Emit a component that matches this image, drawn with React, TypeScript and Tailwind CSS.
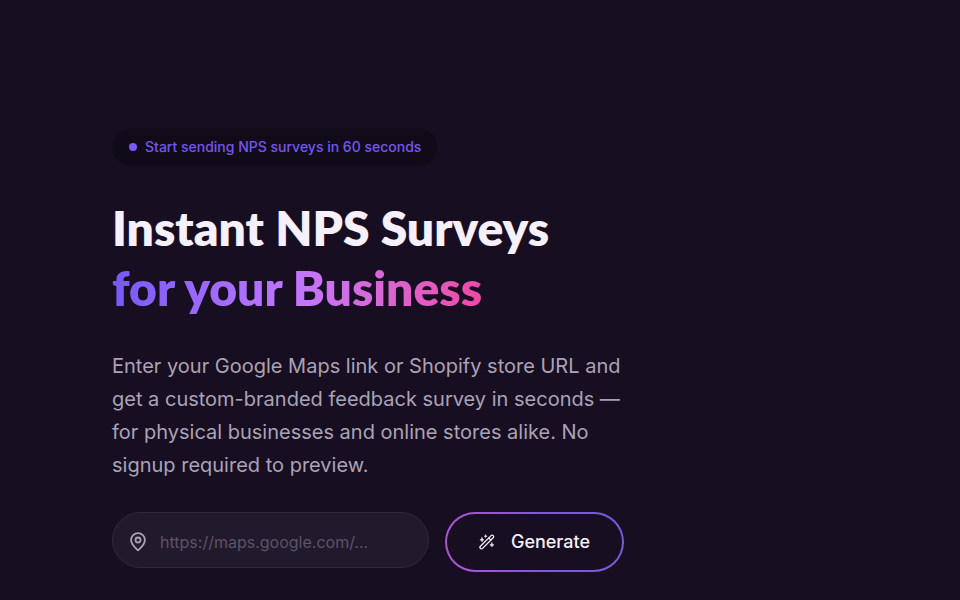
import { useState } from "react";

const MapPinIcon = () => (
    <svg className="size-5 shrink-0 text-[#aaa3b6]" viewBox="0 0 20 20" fill="none" stroke="currentColor" strokeWidth="1.8" strokeLinejoin="round" aria-hidden="true">
        <path d="M10 18.4 C7.4 15.8 3.1 12.6 3.1 8 C3.1 4.2 6.2 1.2 10 1.2 C13.8 1.2 16.9 4.2 16.9 8 C16.9 12.6 12.6 15.8 10 18.4 Z" />
        <circle cx="10" cy="8" r="2.5" />
    </svg>
);

const WandIcon = () => (
    <svg className="size-4 shrink-0" viewBox="0 0 16 16" fill="none" stroke="currentColor" strokeWidth="1.3" strokeLinecap="round" strokeLinejoin="round" aria-hidden="true">
        <path d="M1.4 12.2 L12.1 1.6 C12.7 1 13.6 1 14.2 1.6 C14.8 2.2 14.8 3.1 14.2 3.7 L3.6 14.4 C3 15 2 15 1.4 14.4 C.8 13.8 .8 12.8 1.4 12.2 Z" />
        <path d="M9.7 4 L11.8 6.1" />
        <path d="M3 3.6 L3.6 5.2 L5.1 5.8 L3.6 6.4 L3 7.9 L2.4 6.4 L.9 5.8 L2.4 5.2 Z M12.9 8.7 L13.5 10.3 L15 10.9 L13.5 11.5 L12.9 13 L12.3 11.5 L10.8 10.9 L12.3 10.3 Z" fill="currentColor" strokeWidth="0.5" />
        <path d="M6.6 .7 L7.1 1.7 L8.1 2.2 L7.1 2.7 L6.6 3.7 L6.1 2.7 L5.1 2.2 L6.1 1.7 Z" fill="currentColor" strokeWidth="0.4" />
    </svg>
);

const App = () => {
    const [url, setUrl] = useState("");

    return (
        <main className="min-h-screen bg-[#170e21] px-6 pt-32 pb-7 font-['Inter',sans-serif] md:px-28">
            <div className="max-w-lg">
                <div className="inline-flex items-center gap-2 rounded-full border border-[#150d1e] bg-[#110b19] px-4 py-2 text-sm font-medium text-[#7557ed]">
                    <span className="size-2 rounded-full bg-[#795af5]" />
                    <span>Start sending NPS surveys in 60 seconds</span>
                </div>
                <h1 className="mt-8 font-['Lato',sans-serif] text-5xl leading-[60px] font-extrabold whitespace-nowrap text-[#f5f0fc]">
                    Instant NPS Surveys
                    <br />
                    <span className="inline-block bg-linear-to-r from-[#7659f7] via-[#c277fc] to-[#ee48a5] bg-clip-text text-transparent">
                        for your Business
                    </span>
                </h1>
                <p className="mt-8 text-xl leading-[33px] text-[#aaa3b6]">
                    Enter your Google Maps link or Shopify store URL and get a custom-branded feedback survey in seconds — for physical businesses and online stores alike. No signup required to preview.
                </p>
                <form className="mt-[30px] flex items-start gap-4" onSubmit={(e) => e.preventDefault()}>
                    <label className="flex h-14 min-w-0 flex-1 items-center gap-3 rounded-full border border-[#2f283a] bg-[#211a2d] px-[15px] pt-1">
                        <MapPinIcon />
                        <input
                            type="url"
                            aria-label="Business link"
                            className="w-full min-w-0 bg-transparent text-base text-[#f5f0fc] outline-none placeholder:text-[#5b5366]"
                            placeholder="https://maps.google.com/..."
                            value={url}
                            onChange={(e) => setUrl(e.target.value)}
                        />
                    </label>
                    <button
                        type="submit"
                        className="flex h-15 shrink-0 rounded-full bg-linear-[75deg] from-[#b352d0] via-[#8557dc] to-[#7459dc] p-0.5 text-lg font-medium text-[#f5f0fc]"
                    >
                        <span className="flex h-full items-center gap-4 rounded-full bg-[#170e21] px-8">
                            <WandIcon />
                            Generate
                        </span>
                    </button>
                </form>
            </div>
        </main>
    );
};

export default App;
